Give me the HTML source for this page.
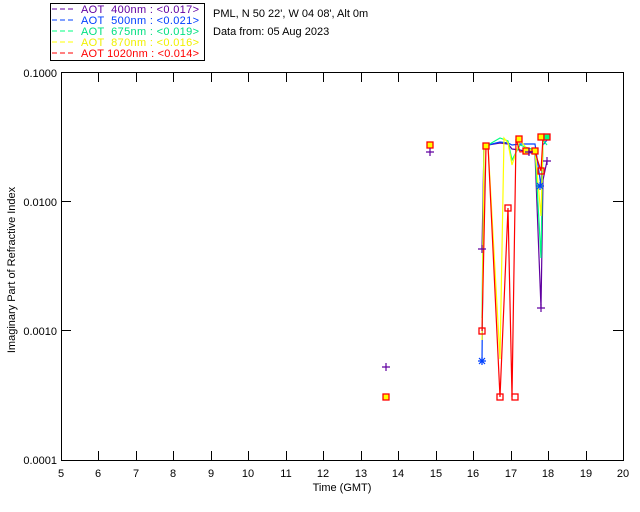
<!DOCTYPE html>
<html><head><style>
body{margin:0;background:#fff;}
svg{display:block;font-family:"Liberation Sans",sans-serif;}
text{white-space:pre;}
</style></head><body>
<svg width="640" height="512" viewBox="0 0 640 512" xmlns="http://www.w3.org/2000/svg">
<rect width="640" height="512" fill="#fff"/>
<rect x="50.5" y="3.5" width="154" height="57" fill="none" stroke="#000"/>
<g font-size="11">
<line x1="52" y1="9" x2="75" y2="9" stroke="#6000a0" stroke-dasharray="5,3"/>
<text x="81" y="13" fill="#6000a0" textLength="118" lengthAdjust="spacing">AOT  400nm : &lt;0.017&gt;</text>
<line x1="52" y1="20" x2="75" y2="20" stroke="#0040ff" stroke-dasharray="5,3"/>
<text x="81" y="24" fill="#0040ff" textLength="118" lengthAdjust="spacing">AOT  500nm : &lt;0.021&gt;</text>
<line x1="52" y1="31" x2="75" y2="31" stroke="#00ff80" stroke-dasharray="5,3"/>
<text x="81" y="35" fill="#00e080" textLength="118" lengthAdjust="spacing">AOT  675nm : &lt;0.019&gt;</text>
<line x1="52" y1="42" x2="75" y2="42" stroke="#ffff00" stroke-dasharray="5,3"/>
<text x="81" y="46" fill="#f0f000" textLength="118" lengthAdjust="spacing">AOT  870nm : &lt;0.016&gt;</text>
<line x1="52" y1="53" x2="75" y2="53" stroke="#ff0000" stroke-dasharray="5,3"/>
<text x="81" y="57" fill="#ff0000" textLength="118" lengthAdjust="spacing">AOT 1020nm : &lt;0.014&gt;</text>
</g>
<text x="213" y="17" font-size="11">PML, N 50 22', W 04 08', Alt 0m</text>
<text x="213" y="35" font-size="11">Data from: 05 Aug 2023</text>
<rect x="61.5" y="72.5" width="562" height="388" fill="none" stroke="#000"/>
<g stroke="#000">
<path d="M98.5 72v10M136.5 72v10M173.5 72v10M211.5 72v10M248.5 72v10M286.5 72v10M323.5 72v10M361.5 72v10M398.5 72v10M436.5 72v10M473.5 72v10M511.5 72v10M548.5 72v10M586.5 72v10"/>
<path d="M98.5 461v-10M136.5 461v-10M173.5 461v-10M211.5 461v-10M248.5 461v-10M286.5 461v-10M323.5 461v-10M361.5 461v-10M398.5 461v-10M436.5 461v-10M473.5 461v-10M511.5 461v-10M548.5 461v-10M586.5 461v-10"/>
<path d="M61 201.5h10M61 330.5h10M623 201.5h-10M623 330.5h-10"/>
</g>
<g font-size="11" text-anchor="end">
<text x="57" y="77">0.1000</text>
<text x="57" y="206">0.0100</text>
<text x="57" y="335">0.0010</text>
<text x="57" y="464">0.0001</text>
</g>
<g font-size="11" text-anchor="middle">
<text x="61" y="477">5</text><text x="98" y="477">6</text><text x="136" y="477">7</text><text x="173" y="477">8</text><text x="211" y="477">9</text><text x="248" y="477">10</text><text x="286" y="477">11</text><text x="323" y="477">12</text><text x="361" y="477">13</text><text x="398" y="477">14</text><text x="436" y="477">15</text><text x="473" y="477">16</text><text x="511" y="477">17</text><text x="548" y="477">18</text><text x="586" y="477">19</text><text x="623" y="477">20</text>
<text x="342" y="491">Time (GMT)</text>
<text transform="translate(15,270) rotate(-90)">Imaginary Part of Refractive Index</text>
</g>
<g fill="none" stroke-width="1.2">
<polyline stroke="#6000a0" points="482,249 484,145 488,145 500,143 508,144 512,149 520,150 528,152 535,154 541,308 543,180 547,161"/>
<polyline stroke="#0040ff" points="482,361 484,145 488,145 500,142 508,143 512,145 520,144 528,144 535,144 541,186 543,145 547,140"/>
<polyline stroke="#00ff80" points="482,318 484,146 488,145 500,138 508,141 512,160 520,145 528,148 535,150 541,258 543,140 547,145"/>
<polyline stroke="#ffff00" points="482,340 484,146 488,145 500,359 504,138 508,143 512,165 520,140 528,150 535,150 541,216 543,140 547,138"/>
<polyline stroke="#ff0000" points="482,331 486,146 488,145 500,397 508,208 512,397 516,139 520,152 528,151 535,152 541,171 543,137 547,137"/>
</g>
<g fill="none" stroke="#ff0000" stroke-width="1.3">
<rect x="383" y="394" width="6" height="6" fill="#ffff00"/>
<rect x="427" y="142" width="6" height="6" fill="#ffff00"/>
<rect x="479" y="328" width="6" height="6"/>
<rect x="483" y="143" width="6" height="6" fill="#ffff00"/>
<rect x="497" y="394" width="6" height="6"/>
<rect x="505" y="205" width="6" height="6"/>
<rect x="512" y="394" width="6" height="6"/>
<rect x="516" y="136" width="6" height="6" fill="#ffff00"/>
<rect x="523" y="148" width="6" height="6" fill="#ffff00"/>
<rect x="532" y="148" width="6" height="6" fill="#ffff00"/>
<rect x="538" y="168" width="6" height="6"/>
<rect x="538" y="134" width="6" height="6" fill="#ffff00"/>
<rect x="544" y="134" width="6" height="6" fill="#00ff80"/>
</g>
<g stroke="#6000a0" stroke-width="1.2">
<path d="M382 367h8M386 363v8M426 152h8M430 148v8M537 308h8M541 304v8M543 161h8M547 157v8M478 249h8M482 245v8M525 152h8M529 148v8"/>
</g>
<g stroke="#0040ff" stroke-width="1.2">
<path d="M478 361h8M482 357v8M479 358l6 6M485 358l-6 6M536 186h8M540 182v8M537 183l6 6M543 183l-6 6"/>
</g>
</svg>
</body></html>
